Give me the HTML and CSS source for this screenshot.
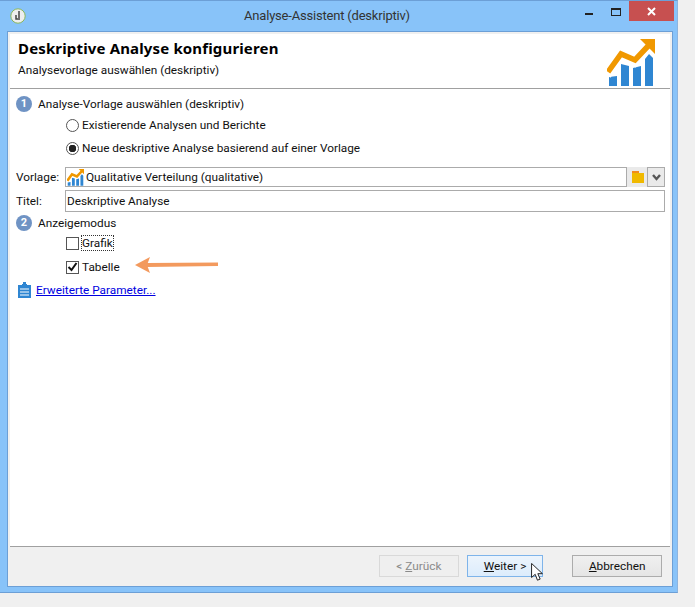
FILE: index.html
```html
<!DOCTYPE html>
<html lang="en">
<head>
  <meta charset="UTF-8">
  <title>Analyse-Assistent (deskriptiv)</title>
  <link rel="stylesheet" href="styles.css">
</head>
<body>
  <div class="window">
    <div class="titlebar">
      <svg class="app-icon" width="16" height="16" viewBox="0 0 16 16">
        <circle cx="8" cy="8" r="7.2" fill="#eee" stroke="#8cb85c"/>
        <path d="M9 3v7M6 7v4h4" fill="none" stroke="#444" stroke-width="1.5"/>
      </svg>
      <div class="title">Analyse-Assistent (deskriptiv)</div>
      <div class="caption">
        <span class="min"></span>
        <span class="max"></span>
        <span class="close">
          <svg width="9" height="9" viewBox="0 0 9 9"><path d="M1 1l7 7M8 1l-7 7" stroke="#fff" stroke-width="2"/></svg>
        </span>
      </div>
    </div>
    <div class="client">
      <div class="header">
        <div>
          <h1>Deskriptive Analyse konfigurieren</h1>
          <p>Analysevorlage auswählen (deskriptiv)</p>
        </div>
        <svg class="logo" width="48" height="48" viewBox="0 0 48 48">
          <path d="M2 38l8-1v10H2zM14 25l8 2v20h-8zM26 29l8-2v20h-8zM38 20l4-5 4 4v28h-8z" fill="#2f86d2"/>
          <path d="M1 37L14 19 28 25 44 8" fill="none" stroke="#fff" stroke-width="6"/>
          <path d="M1 33L14 15 28 21 43 5" fill="none" stroke="#f09800" stroke-width="5.500"/>
          <path d="M33 0H48V15z" fill="#f09800"/>
        </svg>
      </div>
      <div class="main">
        <div class="step">
          <span class="num">1</span>
          <span>Analyse-Vorlage auswählen (deskriptiv)</span>
        </div>
        <div class="options radios">
          <label class="opt"><span class="radio"></span>Existierende Analysen und Berichte</label>
          <label class="opt"><span class="radio on"></span>Neue deskriptive Analyse basierend auf einer Vorlage</label>
        </div>
        <div class="field vorlage">
          <span class="lbl">Vorlage:</span>
          <div class="combo">
            <div class="input">
              <svg width="17" height="17" viewBox="0 0 48 48">
                <path d="M2 38l8-1v10H2zM14 25l8 2v20h-8zM26 29l8-2v20h-8zM38 20l4-5 4 4v28h-8z" fill="#2f86d2"/>
                <path d="M1 33L14 15 28 21 43 5" fill="none" stroke="#f09800" stroke-width="7"/>
                <path d="M33 0H48V15z" fill="#f09800"/>
              </svg>
              <span>Qualitative Verteilung (qualitative)</span>
            </div>
            <span class="folder">
              <svg width="13" height="12" viewBox="0 0 13 12">
                <path d="M1 0h7v2H1z" fill="#f08c1e"/>
                <path d="M1 2h12v10H1z" fill="#f0b900"/>
              </svg>
            </span>
            <span class="drop">
              <svg width="9" height="7" viewBox="0 0 9 7"><path d="M1 1l3.500 4L8 1" fill="none" stroke="#555" stroke-width="2.400"/></svg>
            </span>
          </div>
        </div>
        <div class="field titel">
          <span class="lbl">Titel:</span>
          <div class="input">Deskriptive Analyse</div>
        </div>
        <div class="step step2">
          <span class="num">2</span>
          <span>Anzeigemodus</span>
        </div>
        <div class="options checks">
          <label class="opt"><span class="check"></span><span class="focus">Grafik</span></label>
          <label class="opt">
            <span class="check">
              <svg width="11" height="10" viewBox="0 0 11 10"><path d="M1.500 5l3 3 5-7" fill="none" stroke="#111" stroke-width="2"/></svg>
            </span>Tabelle
          </label>
        </div>
        <svg class="arrow" width="84" height="16" viewBox="0 0 84 16">
          <path d="M12 6L83 5.500V9L12 10z" fill="#f39a5e"/>
          <path d="M0 8L15 0 12 8 15 16z" fill="#f39a5e"/>
        </svg>
        <div class="more">
          <svg width="13" height="16" viewBox="0 0 13 16">
            <path d="M4 2h1V0h3v2h1v1h4v13H0V3h4z" fill="#2f86d2"/>
            <path d="M2 7h9M2 10h9M2 13h9" stroke="#fff"/>
          </svg>
          <a href="#">Erweiterte Parameter...</a>
        </div>
      </div>
      <div class="footer">
        <button class="btn back" disabled>&lt; <u>Z</u>urück</button>
        <button class="btn hover"><u>W</u>eiter &gt;</button>
        <button class="btn cancel"><u>A</u>bbrechen</button>
        <svg class="cursor" width="12" height="19" viewBox="0 0 13 21">
          <path d="M.5.500V16l4-3.500L7 19l3-1.200-2.600-6H12.500z" fill="#fff" stroke="#111"/>
        </svg>
      </div>
    </div>
  </div>
</body>
</html>
```

FILE: styles.css
```css
body {
  margin: 0;
  background: #f0f0f0;
  font-family: Roboto, sans-serif;
  font-size: 11.800px;
  color: #111;
}
.window {
  width: 678px;
  height: 593px;
  box-sizing: border-box;
  padding: 0 4px 5px 7px;
  background: #88c3f9;
  border-top: 1px solid #6c9fd6;
  border-bottom: 1px solid #6c9fd6;
  border-right: 1px solid #8eb4de;
  display: flex;
  flex-direction: column;
}
.titlebar {
  height: 30px;
  flex: none;
  display: flex;
  align-items: flex-start;
}
.app-icon {
  margin: 7px 0 0 3px;
}
.title {
  flex: 1;
  text-align: center;
  font-size: 13px;
  letter-spacing: -.2px;
  line-height: 30px;
  color: #333;
  padding-left: 43px;
}
.caption {
  display: flex;
  align-items: flex-start;
}
.min {
  width: 8px;
  height: 2px;
  background: #222;
  margin: 12px 18px 0 0;
}
.max {
  width: 8px;
  height: 5px;
  border: 1px solid #222;
  border-top-width: 2px;
  margin: 7px 8px 0 0;
}
.close {
  width: 45px;
  height: 20px;
  margin-right: -1px;
  background: #c75050;
  display: flex;
  align-items: center;
  justify-content: center;
}
.client {
  flex: 1;
  display: flex;
  flex-direction: column;
  background: #f0f0f0;
  border: 1px solid #6c9fd6;
  padding: 2px 2px 0;
  min-height: 0;
}
.header {
  height: 55px;
  flex: none;
  background: #fff;
  border-bottom: 1px solid #a0a0a0;
  display: flex;
  justify-content: space-between;
  padding: 3px 15px 0 8px;
  box-sizing: border-box;
}
.header h1 {
  margin: 0;
  font-family: "Noto Sans", sans-serif;
  font-size: 15px;
  line-height: 22px;
  font-weight: 700;
  letter-spacing: .15px;
  color: #000;
}
.header p {
  margin: 3px 0 0;
  line-height: 17px;
}
.logo {
  margin-top: 2px;
}
.main {
  flex: 1;
  background: #fff;
  border-bottom: 1px solid #a0a0a0;
  position: relative;
  padding: 6px 5px 0 6px;
}
.step {
  display: flex;
  align-items: center;
  gap: 6px;
  height: 18px;
}
.num {
  width: 16px;
  height: 16px;
  border-radius: 50%;
  background: #6f93c4;
  color: #fff;
  font-weight: 700;
  font-size: 11px;
  line-height: 16px;
  text-align: center;
}
.options {
  padding-left: 50px;
  display: flex;
  flex-direction: column;
}
.radios {
  gap: 5px;
  margin-top: 3px;
}
.opt {
  display: flex;
  align-items: center;
  gap: 3px;
  height: 18px;
}
.radio {
  width: 11px;
  height: 11px;
  border: 1px solid #555;
  border-radius: 50%;
  background: #fff;
}
.radio.on {
  background: radial-gradient(circle, #222 0 3.500px, #fff 4px);
}
.check {
  width: 11px;
  height: 11px;
  border: 1px solid #555;
  background: #fff;
  display: flex;
  align-items: center;
  justify-content: center;
}
.focus {
  outline: 1px dotted #333;
  line-height: 14px;
}
.field {
  display: flex;
  align-items: center;
}
.lbl {
  width: 49px;
  flex: none;
}
.vorlage {
  margin-top: 10px;
}
.combo {
  flex: 1;
  display: flex;
}
.input {
  flex: 1;
  height: 18px;
  border: 1px solid #ababab;
  line-height: 18px;
  padding-left: 1px;
  background: #fff;
}
.combo .input {
  display: flex;
  align-items: center;
  gap: 2px;
}
.folder {
  width: 20px;
  height: 20px;
  background: #eaeaea;
  display: flex;
  align-items: center;
  justify-content: center;
}
.drop {
  width: 16px;
  height: 18px;
  border: 1px solid #ababab;
  background: #eaeaea;
  display: flex;
  align-items: center;
  justify-content: center;
}
.titel {
  margin-top: 3px;
}
.titel .input {
  height: 20px;
  line-height: 20px;
}
.step2 {
  margin-top: 2px;
}
.checks {
  gap: 6px;
  margin-top: 2px;
}
.arrow {
  position: absolute;
  left: 125px;
  top: 168px;
}
.more {
  display: flex;
  align-items: center;
  gap: 5px;
  margin: 6px 0 0 2px;
}
.more a {
  color: #0000e0;
}
.footer {
  flex: none;
  height: 39px;
  box-sizing: border-box;
  display: flex;
  align-items: center;
  padding: 0 8px 2px 369px;
  position: relative;
}
.btn {
  width: 80px;
  height: 22px;
  padding: 0;
  font: inherit;
  color: #111;
  border: 1px solid #acacac;
  background: linear-gradient(#f0f0f0, #e5e5e5);
  margin-right: 8px;
}
.btn[disabled] {
  color: #8a8a8a;
  background: #efefef;
  border-color: #d9d9d9;
}
.btn.hover {
  width: 77px;
  border-color: #7eb4ea;
  background: linear-gradient(#ecf4fc, #dcecfc);
}
.btn.cancel {
  width: 90px;
  margin: 0 0 0 21px;
}
.cursor {
  position: absolute;
  left: 521px;
  top: 16px;
}
```
